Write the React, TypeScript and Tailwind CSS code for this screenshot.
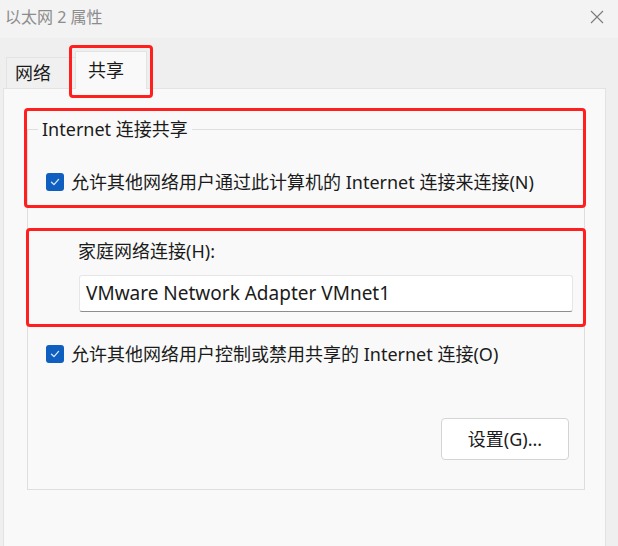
import React from "react";

const Check = () => (
  <span className="flex h-[18px] w-[18px] shrink-0 items-center justify-center rounded-[3px] bg-[#0f5fc0]">
    <svg width="12" height="12" viewBox="0 0 12 12" fill="none">
      <path d="M2.5 6.2 L5 8.6 L9.6 3.4" stroke="#dbe7f7" strokeWidth="1.3" strokeLinecap="round" strokeLinejoin="round" />
    </svg>
  </span>
);

const RedBox = ({ className }: { className: string }) => (
  <div className={`pointer-events-none absolute rounded-[4px] border-[3px] border-[#ff1f1f] ${className}`} />
);

const App = () => {
  return (
    <div className="relative h-[546px] w-[618px] overflow-hidden bg-[#efefef] font-['Noto_Sans','Noto_Sans_CJK_SC',sans-serif] text-[#1b1b1b]">
      {/* title bar */}
      <div className="flex h-[38px] items-center justify-between bg-[#f3f3f3] pb-[5px] pl-[5px] pr-[14px]">
        <p className="text-[16px] text-[#8c8c8c]">以太网 2 属性</p>
        <svg width="14" height="14" viewBox="0 0 14 14">
          <path d="M1 1 L13 13 M13 1 L1 13" stroke="#7a7a7a" strokeWidth="1.1" />
        </svg>
      </div>

      {/* tabs */}
      <div className="flex items-end pl-[6px] pt-[13px]">
        <div className="flex h-[31px] w-[69px] items-center border-l border-t border-[#e3e3e3] bg-[#f0f0f0] pl-[8px] text-[18px]">
          网络
        </div>
        <div className="-mb-px flex h-[38px] w-[72px] items-center border-x border-t border-[#e3e3e3] bg-[#f9f9f9] pl-[12px] text-[18px]">
          共享
        </div>
      </div>

      {/* panel */}
      <div className="ml-[3px] h-[470px] w-[603px] border border-[#e3e3e3] bg-[#f9f9f9] pl-[23px] pt-[27px]">
        <fieldset className="w-[558px] border border-[#dedede] pb-[29px]">
          <legend className="ml-[10px] px-[4px] text-[18px] leading-[26px]">Internet 连接共享</legend>

          <div className="mt-[27px] flex items-center gap-[7px] pl-[18px] text-[18px] leading-[26px]">
            <Check />
            <span>允许其他网络用户通过此计算机的 Internet 连接来连接(N)</span>
          </div>

          <p className="mt-[43px] pl-[50px] text-[18px] leading-[26px]">家庭网络连接(H):</p>

          <div className="ml-[51px] mt-[11px] flex h-[37px] w-[494px] items-center rounded-[3px] border border-[#e6e6e6] border-b-[#8d8d8d] bg-white pl-[6px] text-[19px]">
            VMware Network Adapter VMnet1
          </div>

          <div className="mt-[29px] flex items-center gap-[7px] pl-[18px] text-[18px] leading-[26px]">
            <Check />
            <span>允许其他网络用户控制或禁用共享的 Internet 连接(O)</span>
          </div>

          <div className="mt-[51px] flex justify-end pr-[15px]">
            <button className="flex h-[42px] w-[128px] items-center justify-center rounded-[4px] border border-[#d4d4d4] bg-white text-[18px]">
              设置(G)...
            </button>
          </div>
        </fieldset>
      </div>

      {/* annotation boxes */}
      <RedBox className="left-[69px] top-[45px] h-[53px] w-[84px]" />
      <RedBox className="left-[24px] top-[108px] h-[100px] w-[562px]" />
      <RedBox className="left-[26px] top-[228px] h-[99px] w-[560px]" />
    </div>
  );
};

export default App;
